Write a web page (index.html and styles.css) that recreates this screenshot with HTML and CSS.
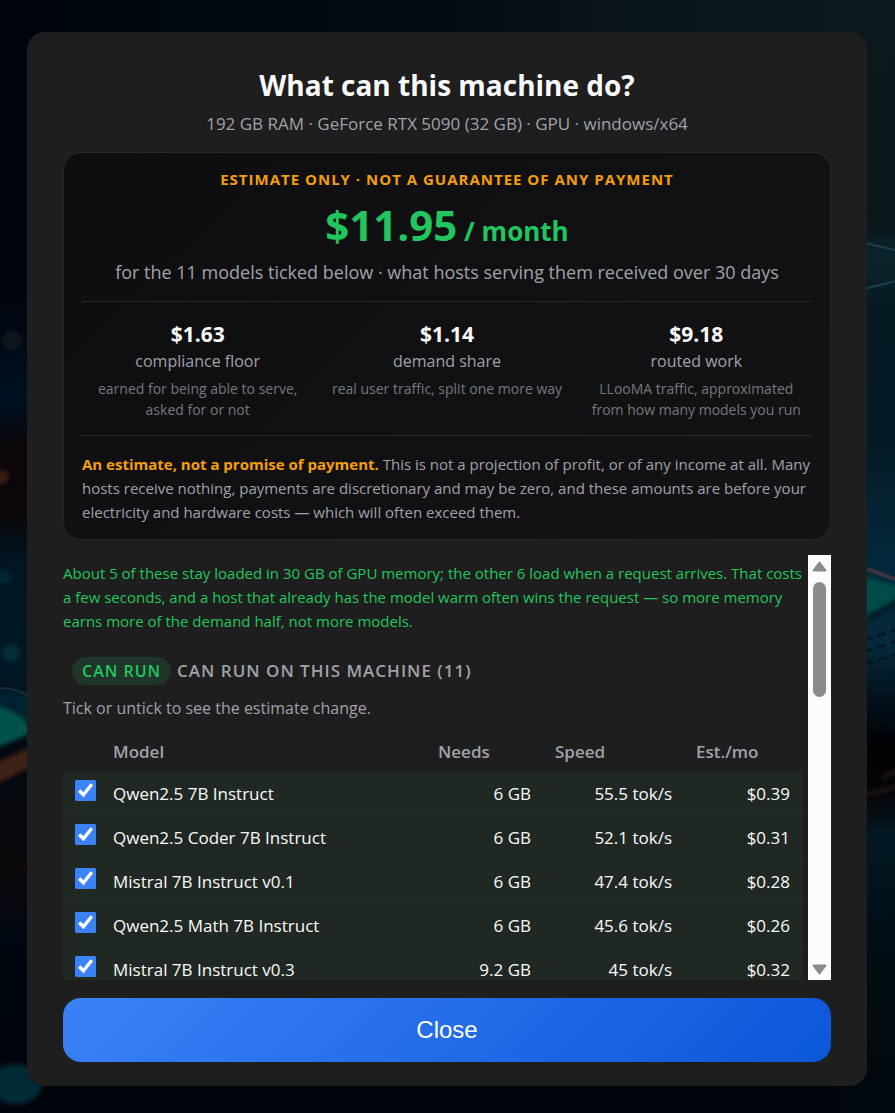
FILE: index.html
```
<!DOCTYPE html>
<html lang="en">
<head>
    <meta charset="UTF-8">
    <meta name="viewport" content="width=device-width, initial-scale=1.0">
    <title>What can this machine do?</title>
    <link rel="stylesheet" href="styles.css">
</head>
<body>
    <!-- Backdrop artwork -->
    <svg class="backdrop" viewBox="0 0 895 1113" preserveAspectRatio="none" aria-hidden="true">
        <defs>
            <linearGradient id="top" x1="0" y1="0" x2="1" y2="0">
                <stop offset="0" stop-color="#00050d"/>
                <stop offset="0.45" stop-color="#010a10"/>
                <stop offset="0.75" stop-color="#0b161c"/>
                <stop offset="1" stop-color="#0c1a20"/>
            </linearGradient>
            <linearGradient id="left" x1="0" y1="0" x2="0" y2="1">
                <stop offset="0" stop-color="#00050d"/>
                <stop offset="0.28" stop-color="#01060f"/>
                <stop offset="0.36" stop-color="#001222"/>
                <stop offset="0.4" stop-color="#0a0509"/>
                <stop offset="0.46" stop-color="#0b0608"/>
                <stop offset="0.5" stop-color="#011420"/>
                <stop offset="0.6" stop-color="#021826"/>
                <stop offset="0.68" stop-color="#02090f"/>
                <stop offset="0.78" stop-color="#0c080c"/>
                <stop offset="0.84" stop-color="#010710"/>
                <stop offset="1" stop-color="#00040b"/>
            </linearGradient>
            <linearGradient id="right" x1="0" y1="0" x2="0" y2="1">
                <stop offset="0" stop-color="#0c1a20"/>
                <stop offset="0.2" stop-color="#0b171d"/>
                <stop offset="0.23" stop-color="#0b242c"/>
                <stop offset="0.28" stop-color="#061a23"/>
                <stop offset="0.4" stop-color="#041b26"/>
                <stop offset="0.5" stop-color="#04283b"/>
                <stop offset="0.58" stop-color="#05293a"/>
                <stop offset="0.63" stop-color="#02101b"/>
                <stop offset="0.67" stop-color="#010205"/>
                <stop offset="0.71" stop-color="#060406"/>
                <stop offset="0.75" stop-color="#021822"/>
                <stop offset="0.86" stop-color="#010d14"/>
                <stop offset="1" stop-color="#01070c"/>
            </linearGradient>
            <filter id="soft" x="-50%" y="-50%" width="200%" height="200%"><feGaussianBlur stdDeviation="2"/></filter>
        </defs>
        <rect width="895" height="1113" fill="#01060d"/>
        <rect width="895" height="60" fill="url(#top)"/>
        <rect y="0" width="60" height="1113" fill="url(#left)"/>
        <rect x="835" width="60" height="1113" fill="url(#right)"/>
        <g filter="url(#soft)">
            <circle cx="2" cy="477" r="7" fill="#3a1a10"/>
            <circle cx="12" cy="340" r="10" fill="#10151f"/>
            <circle cx="4" cy="577" r="7" fill="#032836"/>
            <circle cx="11" cy="653" r="8" fill="#043038"/>
            <path d="M-5 690 Q20 688 34 700 V735 L-5 720Z" fill="#02202e"/>
            <path d="M-5 705 L12 712 Q30 722 32 733 L-5 748Z" fill="#00534c"/>
            <path d="M-5 763 L35 745 V765 L-5 785Z" fill="#3c2415"/>
            <path d="M862 576 L900 586 V597 L862 618Z" fill="#06494a"/>
            <path d="M862 621 L900 599" stroke="#020d14" stroke-width="4"/>
            <path d="M882 778 L900 769 M866 795 L900 786" stroke="#21161a" stroke-width="4"/>
            <ellipse cx="16" cy="1084" rx="26" ry="20" fill="#022c35"/>
        </g>
        <path d="M0 688 Q18 688 32 698" fill="none" stroke="#1b2c3a" stroke-width="2"/>
        <path d="M864 243 L895 250 M864 289 L895 281" fill="none" stroke="#164148" stroke-width="2"/>
        <path d="M864 568 L895 579" fill="none" stroke="#38353f" stroke-width="4"/>
        <path d="M864 640 L895 630 M864 652 L895 642 M864 664 L895 655" fill="none" stroke="#031721" stroke-width="3" stroke-dasharray="9 5"/>
    </svg>

    <main class="modal">
        <header class="modal-header">
            <h1>What can this machine do?</h1>
            <p class="specs">192 GB RAM · GeForce RTX 5090 (32 GB) · GPU · windows/x64</p>
        </header>

        <section class="estimate">
            <p class="eyebrow">Estimate only · not a guarantee of any payment</p>
            <p class="amount">$11.95<span class="per"> / month</span></p>
            <p class="basis">for the 11 models ticked below · what hosts serving them received over 30 days</p>
            <div class="breakdown">
                <div class="part">
                    <div class="part-value">$1.63</div>
                    <div class="part-label">compliance floor</div>
                    <div class="part-note">earned for being able to serve, asked for or not</div>
                </div>
                <div class="part">
                    <div class="part-value">$1.14</div>
                    <div class="part-label">demand share</div>
                    <div class="part-note">real user traffic, split one more way</div>
                </div>
                <div class="part">
                    <div class="part-value">$9.18</div>
                    <div class="part-label">routed work</div>
                    <div class="part-note">LLooMA traffic, approximated<br>from how many models you run</div>
                </div>
            </div>
            <p class="disclaimer"><strong>An estimate, not a promise of payment.</strong> This is not a projection of profit, or of any income at all. Many hosts receive nothing, payments are discretionary and may be zero, and these amounts are before your electricity and hardware costs — which will often exceed them.</p>
        </section>

        <div class="results">
            <div class="list">
                <p class="memory-note">About 5 of these stay loaded in 30 GB of GPU memory; the other 6 load when a request arrives. That costs a few seconds, and a host that already has the model warm often wins the request — so more memory earns more of the demand half, not more models.</p>
                <h2><span class="badge">Can run</span> Can run on this machine (11)</h2>
                <p class="hint">Tick or untick to see the estimate change.</p>
                <table>
                    <colgroup>
                        <col class="col-tick">
                        <col>
                        <col class="col-needs">
                        <col class="col-speed">
                        <col class="col-est">
                    </colgroup>
                    <thead>
                        <tr><th></th><th>Model</th><th>Needs</th><th>Speed</th><th>Est./mo</th></tr>
                    </thead>
                    <tbody>
                        <tr>
                            <td class="tick"><input type="checkbox" id="m1" checked></td>
                            <td><label for="m1">Qwen2.5 7B Instruct</label></td>
                            <td class="num">6 GB</td><td class="num">55.5 tok/s</td><td class="num">$0.39</td>
                        </tr>
                        <tr>
                            <td class="tick"><input type="checkbox" id="m2" checked></td>
                            <td><label for="m2">Qwen2.5 Coder 7B Instruct</label></td>
                            <td class="num">6 GB</td><td class="num">52.1 tok/s</td><td class="num">$0.31</td>
                        </tr>
                        <tr>
                            <td class="tick"><input type="checkbox" id="m3" checked></td>
                            <td><label for="m3">Mistral 7B Instruct v0.1</label></td>
                            <td class="num">6 GB</td><td class="num">47.4 tok/s</td><td class="num">$0.28</td>
                        </tr>
                        <tr>
                            <td class="tick"><input type="checkbox" id="m4" checked></td>
                            <td><label for="m4">Qwen2.5 Math 7B Instruct</label></td>
                            <td class="num">6 GB</td><td class="num">45.6 tok/s</td><td class="num">$0.26</td>
                        </tr>
                        <tr>
                            <td class="tick"><input type="checkbox" id="m5" checked></td>
                            <td><label for="m5">Mistral 7B Instruct v0.3</label></td>
                            <td class="num">9.2 GB</td><td class="num">45 tok/s</td><td class="num">$0.32</td>
                        </tr>
                    </tbody>
                </table>
            </div>
            <div class="scrollbar" aria-hidden="true">
                <svg class="arrow" viewBox="0 0 15 11"><path d="M7.5 1.5 L13.5 9.5 H1.5Z"/></svg>
                <div class="track"><div class="thumb"></div></div>
                <svg class="arrow" viewBox="0 0 15 11"><path d="M7.5 9.5 L13.5 1.5 H1.5Z"/></svg>
            </div>
        </div>

        <button type="button" class="close">Close</button>
    </main>
</body>
</html>
```
FILE: styles.css
```
* {
    box-sizing: border-box;
}

body {
    margin: 0;
    height: 100vh;
    padding: 32px 28px 27px 27px;
    background-color: #01060d;
    color: #fafafa;
    font-family: "Segoe UI", "Open Sans", "Noto Sans", sans-serif;
    display: flex;
    justify-content: center;
}

h1, h2, p {
    margin: 0;
}

.backdrop {
    position: fixed;
    inset: 0;
    width: 100%;
    height: 100%;
    z-index: -1;
}

.modal {
    display: flex;
    flex-direction: column;
    width: 100%;
    max-width: 840px;
    padding: 35px 36px 24px;
    background: #1e1e1e;
    border-radius: 18px;
}

.modal-header {
    text-align: center;
    margin-bottom: 14px;
}

h1 {
    font-size: 28px;
    line-height: 36px;
    font-weight: 700;
}

.specs {
    margin-top: 7px;
    font-size: 17px;
    line-height: 28px;
    color: #a1a1aa;
}

/* Estimate card */
.estimate {
    padding: 16px 18px 15px;
    border: 1px solid #27272a;
    border-radius: 18px;
    background: linear-gradient(135deg, #0e0e10, #131316);
    text-align: center;
}

.eyebrow {
    font-size: 15px;
    line-height: 20px;
    font-weight: 700;
    letter-spacing: 1px;
    text-transform: uppercase;
    color: #f59e0b;
}

.amount {
    margin-top: 8px;
    font-size: 42px;
    line-height: 56px;
    font-weight: 700;
    color: #22c55e;
}

.per {
    font-size: 26px;
    line-height: 28px;
}

.basis {
    margin-top: 5px;
    font-size: 18px;
    line-height: 28px;
    color: #a1a1aa;
}

.breakdown {
    display: grid;
    grid-template-columns: repeat(3, 1fr);
    gap: 18px;
    margin-top: 15px;
    padding: 18px 0 15px;
    border-top: 1px solid #27272a;
    border-bottom: 1px solid #27272a;
}

.part-value {
    font-size: 21px;
    line-height: 28px;
    font-weight: 700;
}

.part-label {
    font-size: 16px;
    line-height: 26px;
    color: #a1a1aa;
}

.part-note {
    margin-top: 4px;
    font-size: 14px;
    line-height: 21px;
    color: #77777e;
}

.disclaimer {
    padding-top: 16px;
    font-size: 15px;
    line-height: 24px;
    text-align: left;
    color: #a1a1aa;
}

.disclaimer strong {
    color: #f59e0b;
}

/* Model list */
.results {
    flex: 1;
    min-height: 0;
    display: flex;
    gap: 6px;
    margin: 15px 0 18px;
}

.list {
    flex: 1;
    padding-top: 6px;
    overflow: auto;
    scrollbar-width: none;
}

.memory-note {
    font-size: 15px;
    line-height: 24px;
    color: #22c55e;
}

h2 {
    display: flex;
    align-items: center;
    gap: 6px;
    margin-top: 24px;
    padding-left: 9px;
    font-size: 17px;
    line-height: 28px;
    font-weight: 600;
    letter-spacing: 1px;
    text-transform: uppercase;
    color: #a1a1aa;
}

.badge {
    padding: 0 10px;
    border-radius: 14px;
    background: #20352a;
    color: #22c55e;
    font-size: 16px;
}

.hint {
    margin-top: 10px;
    font-size: 16px;
    line-height: 26px;
    color: #a1a1aa;
}

table {
    width: 100%;
    margin-top: 12px;
    table-layout: fixed;
    border-collapse: collapse;
    font-size: 17px;
    line-height: 27px;
}

.col-tick {
    width: 38px;
}

.col-needs {
    width: 117px;
}

.col-speed {
    width: 141px;
}

.col-est {
    width: 118px;
}

th {
    height: 38px;
    padding: 0 12px;
    border-bottom: 1px solid #27272a;
    text-align: left;
    font-weight: 600;
    color: #a1a1aa;
}

td {
    height: 44px;
    padding: 8px 12px;
    border-bottom: 1px solid #242a28;
    vertical-align: top;
    white-space: nowrap;
}

tbody tr {
    background: #202823;
}

.tick {
    padding-right: 0;
}

.tick input {
    display: block;
    width: 21px;
    height: 21px;
    margin: 0;
    accent-color: #3b82f6;
}

.num {
    text-align: right;
}

.scrollbar {
    display: flex;
    flex-direction: column;
    align-items: center;
    justify-content: space-between;
    width: 23px;
    padding: 6px 0 5px;
    background: #fcfcfc;
}

.arrow {
    width: 15px;
    height: 11px;
    fill: #8b8b8b;
    stroke: #8b8b8b;
    stroke-width: 2;
    stroke-linejoin: round;
}

.track {
    flex: 1;
    width: 13px;
    margin: 10px 0;
}

.thumb {
    height: 31%;
    border-radius: 7px;
    background: #8b8b8b;
}

.close {
    flex: none;
    height: 64px;
    border: none;
    border-radius: 18px;
    background: linear-gradient(135deg, #3b82f6, #0b57d9);
    color: #fff;
    font-family: "Liberation Sans", Arial, sans-serif;
    font-size: 24px;
    cursor: pointer;
}
```
